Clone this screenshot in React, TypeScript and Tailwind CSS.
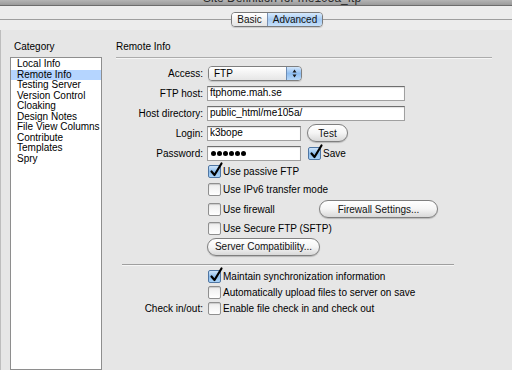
import React from 'react';

const categories = [
  'Local Info',
  'Remote Info',
  'Testing Server',
  'Version Control',
  'Cloaking',
  'Design Notes',
  'File View Columns',
  'Contribute',
  'Templates',
  'Spry',
];

const CheckBox: React.FC<{ checked?: boolean }> = ({ checked = false }) => {
  if (!checked) {
    return (
      <span className="h-[13px] w-[13px] shrink-0 rounded-[2px] border border-[#8f8f8f] bg-gradient-to-b from-[#ececec] to-white shadow-[inset_0_1px_1px_rgba(0,0,0,0.15)]" />
    );
  }
  return (
    <span className="relative h-[13px] w-[13px] shrink-0 rounded-[2px] border border-[#4f76a3] bg-gradient-to-b from-[#cfe5fb] via-[#8dbdec] to-[#a9d2f7]">
      {/* check mark pokes out of the box */}
      <svg className="absolute -top-[3px] left-[1px] overflow-visible" width="13" height="14" viewBox="0 0 13 14">
        <path d="M1.5 8.5 L4.5 12 L11.5 0.5" fill="none" stroke="#000" strokeWidth="2.2" strokeLinecap="round" strokeLinejoin="round" />
      </svg>
    </span>
  );
};

const PillButton: React.FC<{ label: string; className?: string }> = ({ label, className = '' }) => (
  <button
    className={`flex h-[18px] shrink-0 items-center justify-center rounded-full border border-[#7f7f7f] bg-gradient-to-b from-white via-[#f5f5f5] to-[#d9d9d9] text-[10px] text-[#111] shadow-[0_1px_1px_rgba(0,0,0,0.2)] ${className}`}
  >
    {label}
  </button>
);

const TextBox: React.FC<{ value?: string; className?: string; children?: React.ReactNode }> = ({
  value,
  className = '',
  children,
}) => (
  <div
    className={`flex h-[15px] shrink-0 items-center border border-[#a0a0a0] border-t-[#6e6e6e] bg-white px-[2px] leading-none shadow-[inset_0_1px_1px_rgba(0,0,0,0.12)] ${className}`}
  >
    {children ?? value}
  </div>
);

const Row: React.FC<{ label?: string; className?: string; children: React.ReactNode }> = ({
  label,
  className = '',
  children,
}) => (
  <div className={`flex items-center ${className}`}>
    <div className="w-[87px] shrink-0 text-right">{label}</div>
    <div className="ml-[4px] flex items-center">{children}</div>
  </div>
);

const CheckRow: React.FC<{ label: string; checked?: boolean }> = ({ label, checked }) => (
  <span className="flex items-center gap-[2px] pl-[1px]">
    <CheckBox checked={checked} />
    <span>{label}</span>
  </span>
);

export default function App() {
  return (
    <div className="flex h-[370px] w-[512px] flex-col overflow-hidden bg-[#ececec] font-['Liberation_Sans',Arial,sans-serif] text-[10px] text-black">
      {/* title bar, mostly cut off */}
      <div className="h-[6px] shrink-0 overflow-hidden border-b border-[#6c6c6c] bg-gradient-to-b from-[#b4b4b4] to-[#9a9a9a]">
        <div className="-mt-[8px] pl-[203px] text-[12px] leading-[12px] text-[#2a2a2a]">
          Site Definition for me105a_ftp
        </div>
      </div>

      {/* Basic / Advanced switch */}
      <div className="mt-[6px] flex h-[15px] shrink-0 items-center">
        <div className="h-px w-[231px] bg-[#9e9e9e]" />
        <div className="flex h-[15px] overflow-hidden rounded-[4px] border border-[#7a7a7a] shadow-[0_1px_1px_rgba(0,0,0,0.15)]">
          <div className="flex w-[35px] items-center justify-center bg-gradient-to-b from-white to-[#e4e4e4] text-[#111]">
            Basic
          </div>
          <div className="flex w-[55px] items-center justify-center border-l border-[#7a8fb0] bg-gradient-to-b from-[#d6e9fc] via-[#a5cbf3] to-[#c6e0fa] text-[#111]">
            Advanced
          </div>
        </div>
        <div className="h-px flex-1 bg-[#9e9e9e]" />
      </div>

      {/* main panel */}
      <div className="mt-[3px] flex flex-1 border-l border-[#bdbdbd] bg-[#e6e6e6]">
        {/* category column */}
        <div className="flex w-[101px] shrink-0 flex-col pl-[9px]">
          <div className="pt-[11px] pl-[4px] leading-[12px]">Category</div>
          <div className="mt-[4px] flex-1 border border-[#8e8e8e] bg-white pt-px">
            {categories.map((c) => (
              <div
                key={c}
                className={`h-[10.5px] pl-[6px] leading-[10.5px] ${c === 'Remote Info' ? 'bg-[#b5d5ff]' : ''}`}
              >
                {c}
              </div>
            ))}
          </div>
        </div>

        {/* remote info form */}
        <div className="ml-[14px] flex w-[376px] flex-col">
          <div className="pt-[11px] leading-[12px]">Remote Info</div>
          <div className="mt-[4px] h-px bg-[#acacac]" />
          <div className="h-px bg-[#f6f6f6]" />

          <Row label="Access:" className="mt-[5px] h-[19px]">
            <div className="ml-px flex h-[15px] w-[94px] overflow-hidden rounded-[4px] border border-[#7f7f7f] shadow-[0_1px_1px_rgba(0,0,0,0.15)]">
              <div className="flex flex-1 items-center bg-gradient-to-b from-white to-[#e6e6e6] pl-[5px]">FTP</div>
              <div className="flex w-[15px] items-center justify-center border-l border-[#6d8db5] bg-gradient-to-b from-[#d2e6fb] via-[#8ebdf0] to-[#b7d8f8]">
                <svg width="5" height="9" viewBox="0 0 5 9">
                  <path d="M2.5 0.5 L4.5 3.5 L0.5 3.5 Z M2.5 8.5 L4.5 5.5 L0.5 5.5 Z" fill="#1a1a1a" />
                </svg>
              </div>
            </div>
          </Row>

          <Row label="FTP host:" className="h-[20px]">
            <TextBox value="ftphome.mah.se" className="w-[198px]" />
          </Row>

          <Row label="Host directory:" className="h-[20px]">
            <TextBox value="public_html/me105a/" className="w-[198px]" />
          </Row>

          <Row label="Login:" className="h-[20px]">
            <TextBox value="k3bope" className="w-[94px]" />
            <PillButton label="Test" className="ml-[6px] w-[41px]" />
          </Row>

          <Row label="Password:" className="h-[20px]">
            <TextBox className="w-[94px]">
              <span className="flex gap-[1px] pl-px">
                {[0, 1, 2, 3, 4, 5].map((i) => (
                  <span key={i} className="h-[5px] w-[5px] rounded-full bg-black" />
                ))}
              </span>
            </TextBox>
            <span className="ml-[7px] flex items-center gap-[2px]">
              <CheckBox checked />
              <span>Save</span>
            </span>
          </Row>

          <Row className="h-[16px]">
            <CheckRow label="Use passive FTP" checked />
          </Row>
          <Row className="h-[20px]">
            <CheckRow label="Use IPv6 transfer mode" />
          </Row>
          <Row className="h-[20px]">
            <span className="w-[112px]">
              <CheckRow label="Use firewall" />
            </span>
            <PillButton label="Firewall Settings..." className="w-[119px]" />
          </Row>
          <Row className="h-[18px]">
            <CheckRow label="Use Secure FTP (SFTP)" />
          </Row>
          <Row className="h-[19px]">
            <PillButton label="Server Compatibility..." className="w-[113px]" />
          </Row>

          <div className="ml-[6px] mt-[8px] h-px w-[332px] bg-[#9f9f9f]" />
          <div className="ml-[6px] h-px w-[332px] bg-[#f6f6f6]" />

          <Row className="mt-[2px] h-[16px]">
            <CheckRow label="Maintain synchronization information" checked />
          </Row>
          <Row className="h-[16px]">
            <CheckRow label="Automatically upload files to server on save" />
          </Row>
          <Row label="Check in/out:" className="h-[16px]">
            <CheckRow label="Enable file check in and check out" />
          </Row>
        </div>
      </div>
    </div>
  );
}
